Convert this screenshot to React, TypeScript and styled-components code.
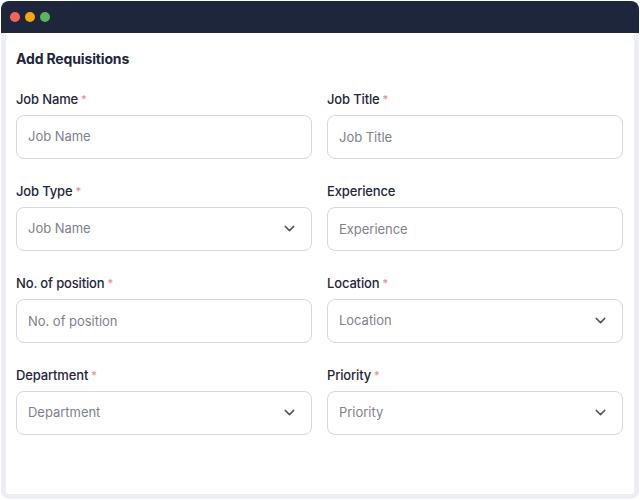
import styled, { createGlobalStyle } from 'styled-components'
import { ChevronDown } from 'lucide-react'

const GlobalStyle = createGlobalStyle`
  html, body {
    margin: 0;
    padding: 0;
    background: #FFFFFF;
  }
  * { box-sizing: border-box; }
`

const Page = styled.div`
  width: 640px;
  height: 500px;
  padding: 1px;
  font-family: Inter, "Liberation Sans", sans-serif;
`

const Window = styled.div`
  height: 498px;
  display: flex;
  flex-direction: column;
  background: #EDEEF4;
  border-radius: 8px;
  overflow: hidden;
`

const TitleBar = styled.div`
  height: 32px;
  flex-shrink: 0;
  display: flex;
  align-items: center;
  gap: 5px;
  padding: 0 9px;
  background: #1E263B;
`

const Dot = styled.span<{ $color: string }>`
  width: 10px;
  height: 10px;
  border-radius: 50%;
  background: ${props => props.$color};
`

const Body = styled.div`
  flex: 1;
  margin: 0 5px 5px;
  padding: 17px 10px 0;
  background: #FFFFFF;
  border-radius: 0 0 3px 3px;
`

const Heading = styled.h1`
  margin: 0 0 22px;
  font-size: 14px;
  line-height: 18px;
  font-weight: 700;
  letter-spacing: -0.15px;
  color: #1E263B;
`

const FormGrid = styled.div`
  display: grid;
  grid-template-columns: 296px 296px;
  column-gap: 15px;
  row-gap: 23px;
`

const Field = styled.div`
  display: flex;
  flex-direction: column;
  gap: 7px;
`

const Label = styled.label`
  font-size: 13px;
  line-height: 18px;
  font-weight: 450;
  letter-spacing: -0.15px;
  color: #1E263B;
`

const Required = styled.span`
  margin-left: 3px;
  font-size: 11px;
  vertical-align: 1px;
  color: #F48380;
`

const Control = styled.div<{ $raised?: boolean }>`
  height: 44px;
  display: flex;
  align-items: center;
  justify-content: space-between;
  padding: 0 14px ${props => (props.$raised ? '2px' : '0')} 11px;
  background: #FFFFFF;
  border: 1px solid #D5D7DE;
  border-radius: 8px;
`

const Placeholder = styled.span`
  font-size: 13px;
  letter-spacing: -0.03px;
  color: #7E818E;
`

const Chevron = styled(ChevronDown)`
  width: 17px;
  height: 17px;
  margin-right: -1px;
  color: #4F5260;
`

const fields = [
  { label: 'Job Name', required: true, raised: true },
  { label: 'Job Title', required: true },
  { label: 'Job Type', placeholder: 'Job Name', required: true, select: true, raised: true },
  { label: 'Experience' },
  { label: 'No. of position', required: true },
  { label: 'Location', required: true, select: true, raised: true },
  { label: 'Department', required: true, select: true, raised: true },
  { label: 'Priority', required: true, select: true, raised: true },
]

export default function App() {
  return (
    <Page>
      <GlobalStyle />
      <Window>
        <TitleBar>
          <Dot $color="#F4645F" />
          <Dot $color="#F5A70F" />
          <Dot $color="#5CB45C" />
        </TitleBar>
        <Body>
          <Heading>Add Requisitions</Heading>
          <FormGrid>
            {fields.map(field => (
              <Field key={field.label}>
                <Label>
                  {field.label}
                  {field.required && <Required>*</Required>}
                </Label>
                <Control $raised={field.raised}>
                  <Placeholder>{field.placeholder || field.label}</Placeholder>
                  {field.select && <Chevron />}
                </Control>
              </Field>
            ))}
          </FormGrid>
        </Body>
      </Window>
    </Page>
  )
}
